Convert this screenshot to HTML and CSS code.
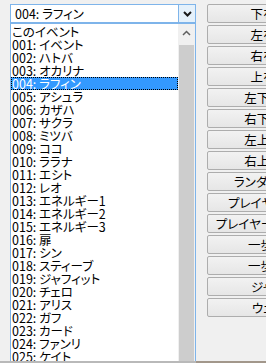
FILE: index.html
```html
<!DOCTYPE html>
<html lang="ja">
<head>
<meta charset="utf-8">
<link rel="stylesheet" href="styles.css">
</head>
<body>
<div class="window">
  <div class="main">
    <div class="left">
      <div class="combo">
        <div class="combo-text">004: ラフィン</div>
        <div class="combo-btn">
          <svg width="9" height="6" viewBox="0 0 9 6"><path d="M1 1 L4.5 4.5 L8 1" fill="none" stroke="#1a1a1a" stroke-width="2"/></svg>
        </div>
      </div>
      <div class="list">
        <div class="items">
          <div class="item">このイベント</div>
          <div class="item">001: イベント</div>
          <div class="item">002: ハトバ</div>
          <div class="item">003: オカリナ</div>
          <div class="item selected">004: ラフィン</div>
          <div class="item">005: アシュラ</div>
          <div class="item">006: カザハ</div>
          <div class="item">007: サクラ</div>
          <div class="item">008: ミツバ</div>
          <div class="item">009: ココ</div>
          <div class="item">010: ララナ</div>
          <div class="item">011: エシト</div>
          <div class="item">012: レオ</div>
          <div class="item">013: エネルギー1</div>
          <div class="item">014: エネルギー2</div>
          <div class="item">015: エネルギー3</div>
          <div class="item">016: 扉</div>
          <div class="item">017: シン</div>
          <div class="item">018: スティーブ</div>
          <div class="item">019: ジャフィット</div>
          <div class="item">020: チェロ</div>
          <div class="item">021: アリス</div>
          <div class="item">022: ガフ</div>
          <div class="item">023: カード</div>
          <div class="item">024: ファンリ</div>
          <div class="item">025: ケイト</div>
        </div>
        <div class="scrollbar">
          <div class="sb-arrow">
            <svg width="9" height="6" viewBox="0 0 9 6"><path d="M1 5 L4.5 1.5 L8 5" fill="none" stroke="#606060" stroke-width="1.5"/></svg>
          </div>
          <div class="sb-track"><div class="sb-thumb"></div></div>
        </div>
      </div>
    </div>
    <div class="buttons">
      <div class="btn">下を向く</div>
      <div class="btn">左を向く</div>
      <div class="btn">右を向く</div>
      <div class="btn">上を向く</div>
      <div class="btn">左下を向く</div>
      <div class="btn">右下を向く</div>
      <div class="btn">左上を向く</div>
      <div class="btn">右上を向く</div>
      <div class="btn">ランダムに向く</div>
      <div class="btn">プレイヤーを向く</div>
      <div class="btn">プレイヤーの逆を向く</div>
      <div class="btn">一歩前進</div>
      <div class="btn">一歩後退</div>
      <div class="btn">ジャンプ</div>
      <div class="btn">ウェイト</div>
    </div>
  </div>
  <div class="band"><div class="band-left"></div><div class="band-right"></div></div>
</div>
</body>
</html>
```

FILE: styles.css
```css
html, body {
  margin: 0;
  padding: 0;
  background: #f0f0f0;
  overflow: hidden;
}
body {
  font-family: "Noto Sans CJK JP", sans-serif;
  font-size: 12.5px;
  font-feature-settings: "palt";
  color: #000;
}
.window {
  width: 266px;
  height: 363px;
  display: flex;
  flex-direction: column;
  overflow: hidden;
}
.main {
  display: flex;
  height: 361px;
  overflow: hidden;
}
.left {
  width: 186px;
  margin-left: 10px;
  padding-top: 4px;
  display: flex;
  flex-direction: column;
  flex-shrink: 0;
}
.combo {
  height: 19px;
  box-sizing: border-box;
  border: 1px solid #7eb4ea;
  background: #fff;
  display: flex;
}
.combo-text {
  flex: 1;
  padding-left: 4px;
  line-height: 17px;
  white-space: nowrap;
}
.combo-btn {
  width: 17px;
  box-sizing: border-box;
  border-left: 1px solid #7eb4ea;
  background: #e5f1fb;
  display: flex;
  align-items: center;
  justify-content: center;
}
.list {
  flex: 1;
  border: 1px solid #7eb4ea;
  border-bottom: none;
  background: #fff;
  display: flex;
  overflow: hidden;
}
.items {
  flex: 1;
  padding-top: 1px;
}
.item {
  height: 13px;
  line-height: 13px;
  padding-left: 1px;
  white-space: nowrap;
}
.item.selected {
  background: #3399ff;
  color: #fff;
  outline: 1px dotted #000;
  outline-offset: -1px;
}
.scrollbar {
  width: 17px;
  display: flex;
  flex-direction: column;
  background: #f0f0f0;
}
.sb-arrow {
  height: 17px;
  display: flex;
  align-items: center;
  justify-content: center;
}
.sb-track {
  flex: 1;
  padding: 4px 1px 0 1px;
  display: flex;
}
.sb-thumb {
  flex: 1;
  background: #cdcdcd;
}
.buttons {
  margin-left: 11px;
  padding-top: 4px;
  display: flex;
  flex-direction: column;
  gap: 2px;
  flex-shrink: 0;
}
.btn {
  width: 132px;
  height: 19px;
  box-sizing: border-box;
  border: 1px solid #adadad;
  border-radius: 2px;
  background: linear-gradient(#f2f2f2, #e6e6e6);
  text-align: center;
  line-height: 17px;
  white-space: nowrap;
}
.band {
  height: 2px;
  display: flex;
}
.band-left {
  width: 196px;
  background: #b9b9b9;
}
.band-right {
  flex: 1;
  background: #a2978b;
}
```
